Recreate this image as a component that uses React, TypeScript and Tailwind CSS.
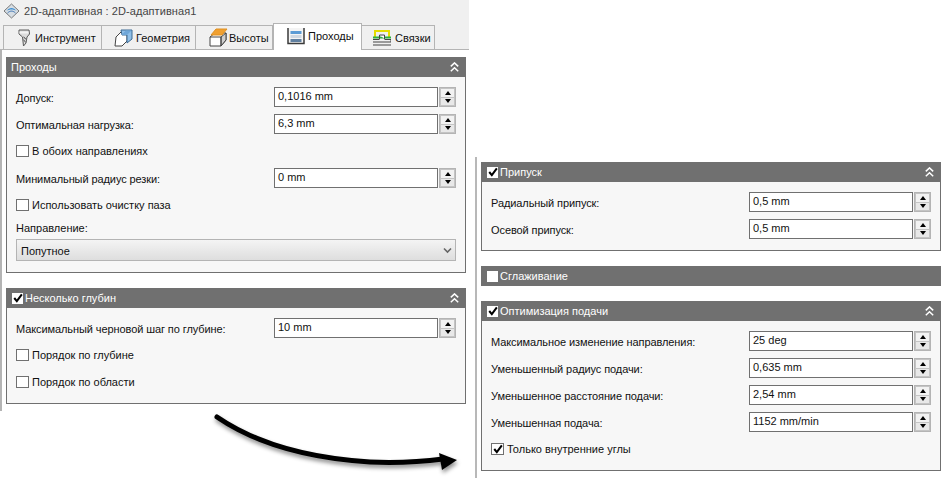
import type { ReactNode } from "react";

const font = "font-['Liberation_Sans',Arial,sans-serif]";

function Collapse() {
  return (
    <svg width="9" height="10" viewBox="0 0 9 10" fill="none" stroke="#fff" strokeWidth="1.5" className="shrink-0">
      <path d="M0.8 4.4 L4.5 0.9 L8.2 4.4" />
      <path d="M0.8 9.2 L4.5 5.7 L8.2 9.2" />
    </svg>
  );
}

function Tick({ size = 12 }: { size?: number }) {
  return (
    <svg width={size} height={size} viewBox="0 0 12 12">
      <path d="M1.5 6 L4.6 9.8 L10.6 1.6" fill="none" stroke="#000" strokeWidth="2.4" />
    </svg>
  );
}

function Check({ label, checked }: { label: string; checked?: boolean }) {
  return (
    <div className="flex h-5 items-center">
      <div className="flex h-3 w-[13px] items-center justify-center border border-[#707070] bg-white">
        {checked && <Tick size={10} />}
      </div>
      <span className="mt-px ml-[3px] text-[#111]">{label}</span>
    </div>
  );
}

function Spinner() {
  return (
    <div className="ml-px flex h-5 w-[17px] flex-col gap-px border border-[#b4b4b4] bg-[#c4c4c4] p-px">
      <div className="flex flex-1 items-center justify-center bg-[#f2f2f2]">
        <div className="h-0 w-0 border-x-[3.5px] border-b-[4px] border-x-transparent border-b-black" />
      </div>
      <div className="flex flex-1 items-center justify-center bg-[#e8e8e8]">
        <div className="h-0 w-0 border-x-[3.5px] border-t-[4px] border-x-transparent border-t-black" />
      </div>
    </div>
  );
}

function NumberRow({ label, value }: { label: string; value: string }) {
  return (
    <div className="flex h-5 items-center">
      <span className="mt-[3px] w-[258px] tracking-[-0.09px] text-[#111]">{label}</span>
      <div className="flex h-5 w-[164px] items-center border border-[#707070] bg-white pb-px pl-[3px] text-[#111]">
        {value}
      </div>
      <Spinner />
    </div>
  );
}

function Panel({
  title,
  check,
  children,
}: {
  title: string;
  check?: "on" | "off";
  children?: ReactNode;
}) {
  return (
    <section className="w-[460px]">
      <header className="flex h-5 items-center bg-[#707070] pl-[6px] pr-[7px] text-white">
        {check && (
          <div className="mr-[2px] flex h-[11px] w-[11px] items-center justify-center bg-white">
            {check === "on" && <Tick size={10} />}
          </div>
        )}
        <span className={check ? "flex-1" : "-ml-px flex-1"}>{title}</span>
        {children && <Collapse />}
      </header>
      {children && (
        <div className="flex flex-col gap-[7px] border border-t-0 border-[#707070] bg-[#f7f7f7] px-[9px] pt-[10px] pb-[11px]">
          {children}
        </div>
      )}
    </section>
  );
}

function ToolIcon() {
  return (
    <svg width="16" height="18" viewBox="0 0 16 18" className="mt-px">
      <path d="M3 1 H13 L13.5 5 L11 8 L10 14 L7.5 17 L6.5 8 L3 5 Z" fill="#dcdcdc" stroke="#5a5a5a" />
      <path d="M3.5 2.5 H12.5 V4.5 H3.5 Z" fill="#f4f4f4" />
      <path d="M7.5 8 L9.8 10 M7.5 11 L9.6 13" stroke="#333" />
    </svg>
  );
}

function GeometryIcon() {
  return (
    <svg width="20" height="19" viewBox="0 0 20 19">
      <path d="M2 9 L7 4 H13 V13 L8 18 H1 Z" fill="#fff" stroke="#444" />
      <path d="M7 2 H18 V11 L13 15 V7 H8 Z" fill="#8fbfe8" stroke="#3c6a94" />
      <path d="M7.5 7 L12 2.5 H17.5 L13 7 Z" fill="#6ea6d8" />
    </svg>
  );
}

function HeightsIcon() {
  return (
    <svg width="20" height="19" viewBox="0 0 20 19">
      <path d="M2 9 L7 5 H18 V12 L13 18 H2 Z" fill="#fff" stroke="#444" />
      <path d="M13 9 L18 5 V12 L13 18 Z" fill="#cfcfcf" stroke="#444" />
      <path d="M2 9 H13 V18" fill="none" stroke="#444" />
      <path d="M3 7 L8 1 H19 L14 7 Z" fill="#f0a030" stroke="#e09020" />
    </svg>
  );
}

function PassesIcon() {
  return (
    <svg width="18" height="18" viewBox="0 0 18 18">
      <path d="M1 1 V16.5 H17 V1" fill="#f4f4f4" stroke="#3a3a3a" strokeWidth="1.5" />
      <path d="M1 0 H17" stroke="#fff" />
      <rect x="3.5" y="4" width="11" height="3" fill="#5b9bd5" />
      <rect x="3.5" y="8" width="11" height="3" fill="#cfd8e2" />
      <rect x="3.5" y="12" width="11" height="3" fill="#5f7fa0" />
    </svg>
  );
}

function LinksIcon() {
  return (
    <svg width="18" height="16" viewBox="0 0 18 16" className="mt-px">
      <path d="M2 7 V1 H16 V7" fill="none" stroke="#e4dc00" strokeWidth="2" />
      <path d="M0 7.5 H18" stroke="#2fae3f" strokeWidth="2" />
      <path d="M6.5 5.5 H11.5 V8.5" fill="#fff" />
      <path d="M6.5 9 V5 H11.5 V9 M0 9.5 H6.5 M11.5 9.5 H18 V12 H0 M0 15 H18" fill="none" stroke="#444" />
    </svg>
  );
}

function Tab({
  label,
  icon,
  className,
  active,
}: {
  label: string;
  icon: ReactNode;
  className: string;
  active?: boolean;
}) {
  return (
    <div
      className={
        active
          ? `relative z-10 -mt-[2px] -mb-px flex h-[27px] items-center border border-b-0 border-[#b4b4b4] bg-white pb-[3px] ${className}`
          : `flex h-[25px] items-center border border-l-0 border-[#b4b4b4] bg-[#f0f0f0] first:border-l ${className}`
      }
    >
      {icon}
      <span className="mt-px text-[#111]">{label}</span>
    </div>
  );
}

function LeftColumn() {
  return (
    <div className="w-[469px] shrink-0">
      <div className="h-[49px] bg-[#f0f0f0] pl-[3px]">
        <div className="flex h-[22px] items-center gap-[4px] text-[#444]">
          <svg width="17" height="16" viewBox="0 0 17 16" className="shrink-0">
            <path d="M8.5 1 L16 8 L8.5 15 L1 8 Z" fill="#d6dde3" stroke="#7a7a7a" />
            <path d="M3.5 8 C6.5 4 10.5 4 13.5 8 C10.5 6 6.5 6 3.5 8 Z" fill="#3f8fd2" />
            <path d="M4.5 10 C7 7.5 10 7.5 12.5 10" fill="none" stroke="#3a70b0" />
          </svg>
          <span className="tracking-[0.07px]">2D-адаптивная : 2D-адаптивная1</span>
        </div>
        <div className="mt-[3px] flex">
          <Tab label="Инструмент" icon={<ToolIcon />} className="w-[99px] gap-[3px] pl-[12px]" />
          <Tab label="Геометрия" icon={<GeometryIcon />} className="w-[94px] gap-[2px] pl-[12px]" />
          <Tab label="Высоты" icon={<HeightsIcon />} className="w-[77px] gap-px pl-[12px]" />
          <Tab label="Проходы" icon={<PassesIcon />} className="w-[89px] gap-[3px] pl-[13px]" active />
          <Tab label="Связки" icon={<LinksIcon />} className="w-[73px] gap-[4px] pl-[11px]" />
        </div>
      </div>
      <div className="flex h-[362px] flex-col gap-[15px] border-t border-[#b4b4b4] border-l-2 border-l-[#b4b4b4] bg-white pt-[7px] pl-[4px]">
        <Panel title="Проходы">
          <NumberRow label="Допуск:" value="0,1016 mm" />
          <NumberRow label="Оптимальная нагрузка:" value="6,3 mm" />
          <Check label="В обоих направлениях" />
          <NumberRow label="Минимальный радиус резки:" value="0 mm" />
          <Check label="Использовать очистку паза" />
          <div className="-mb-[7px] h-[17px] pt-px text-[#111]">Направление:</div>
          <div className="flex h-[22px] items-center justify-between border border-[#b4b4b4] bg-gradient-to-b from-[#f4f4f4] to-[#dedede] pt-[3px] pr-[3px] pl-1 text-[#111]">
            Попутное
            <svg width="9" height="7" viewBox="0 0 9 7" fill="none" stroke="#666" strokeWidth="1.6" className="-mt-[3px]">
              <path d="M1 1.5 L4.5 5 L8 1.5" />
            </svg>
          </div>
        </Panel>
        <Panel title="Несколько глубин" check="on">
          <NumberRow label="Максимальный черновой шаг по глубине:" value="10 mm" />
          <Check label="Порядок по глубине" />
          <Check label="Порядок по области" />
        </Panel>
      </div>
    </div>
  );
}

function RightColumn() {
  return (
    <div className="mt-[157px] ml-[6px] flex h-[321px] flex-col gap-[15px] border-l-2 border-[#b8b8b8] pt-[5px] pl-[4px]">
      <Panel title="Припуск" check="on">
        <NumberRow label="Радиальный припуск:" value="0,5 mm" />
        <NumberRow label="Осевой припуск:" value="0,5 mm" />
      </Panel>
      <Panel title="Сглаживание" check="off" />
      <Panel title="Оптимизация подачи" check="on">
        <NumberRow label="Максимальное изменение направления:" value="25 deg" />
        <NumberRow label="Уменьшенный радиус подачи:" value="0,635 mm" />
        <NumberRow label="Уменьшенное расстояние подачи:" value="2,54 mm" />
        <NumberRow label="Уменьшенная подача:" value="1152 mm/min" />
        <Check label="Только внутренние углы" checked />
      </Panel>
    </div>
  );
}

export default function App() {
  return (
    <div className={`relative flex h-[488px] w-[948px] overflow-hidden bg-white text-[11px] leading-none ${font}`}>
      <LeftColumn />
      <RightColumn />
      <svg
        className="absolute top-[405px] left-[205px] drop-shadow-[1px_3px_2px_rgba(0,0,0,0.45)]"
        width="265"
        height="75"
        viewBox="0 0 265 75"
      >
        <path
          d="M12 12 C50 38 100 53 165 57 C190 58 215 57 238 54"
          fill="none"
          stroke="#000"
          strokeWidth="5"
          strokeLinecap="round"
        />
        <path d="M234 48 L252 55 L237 65 Z" fill="#000" />
      </svg>
    </div>
  );
}
